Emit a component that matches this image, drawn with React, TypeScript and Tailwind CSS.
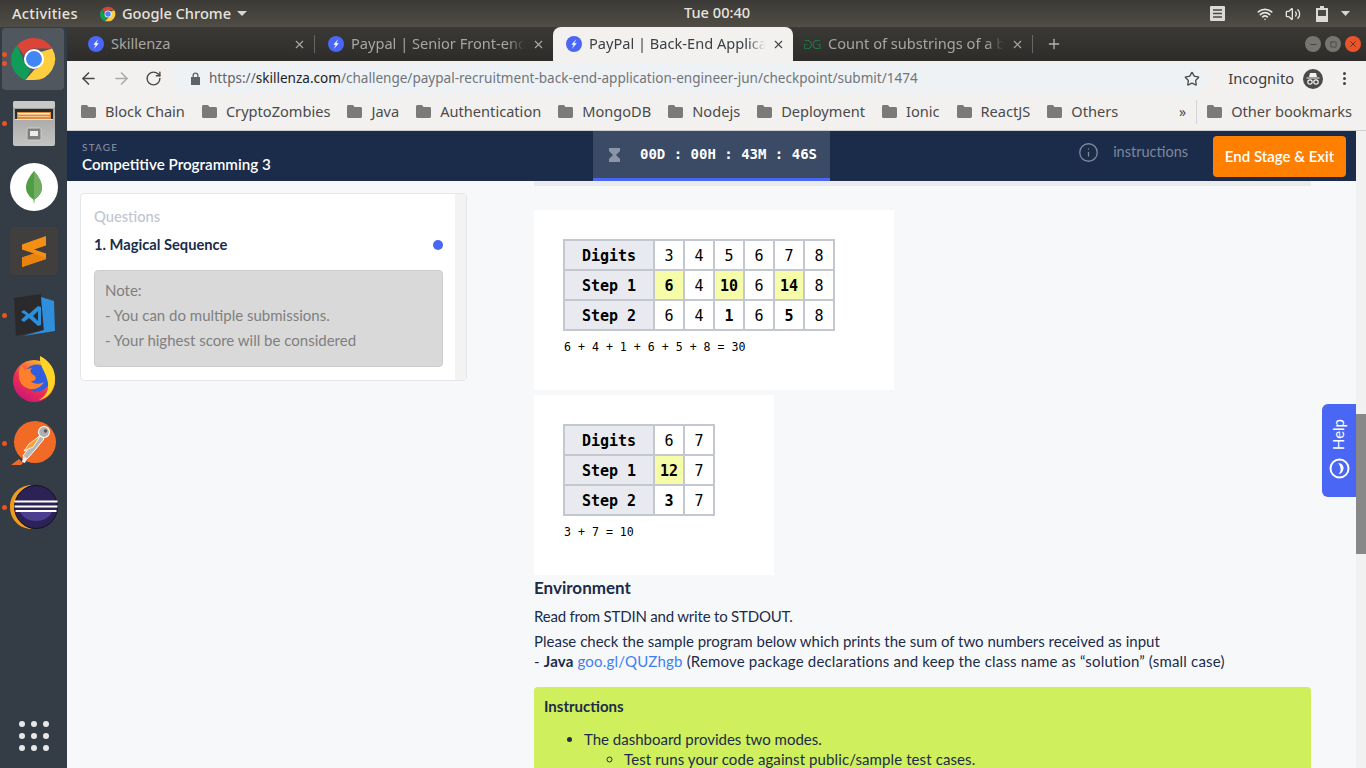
import React from 'react';
import { ArrowLeft, ArrowRight, RotateCw, Star, Info, X, Plus, Minus, Square, Wifi, Volume2 } from 'lucide-react';

const ui = 'font-["Noto_Sans",sans-serif]';
const app = 'font-["Lato",sans-serif]';
const mono = 'font-["DejaVu_Sans_Mono",monospace]';

function Bolt({ size = 16 }: { size?: number }) {
  return (
    <svg width={size} height={size} viewBox="0 0 16 16" className="shrink-0">
      <circle cx="8" cy="8" r="8" fill="#4a66f5" />
      <path d="M10.400 3 5.400 8.800h2.400l-2 4.200 5-5.800H8.300z" fill="#fff" />
    </svg>
  );
}

function ChromeLogo({ size }: { size: number }) {
  return (
    <svg width={size} height={size} viewBox="0 0 48 48">
      <path d="M24 2a22 22 0 0 1 19 11H24a11 11 0 0 0-10.400 7.400L6.300 9.900A22 22 0 0 1 24 2z" fill="#db4437" />
      <path d="M6.300 9.900 15.800 31a11 11 0 0 0 5 3.600L15 46A22 22 0 0 1 6.300 9.900z" fill="#0f9d58" />
      <path d="M43 13a22 22 0 0 1-19.500 33L15 46l9.500-11A11 11 0 0 0 33 24a11 11 0 0 0-3-7z" fill="#ffcd40" />
      <circle cx="24" cy="24" r="10.500" fill="#fff" />
      <circle cx="24" cy="24" r="8.300" fill="#4285f4" />
    </svg>
  );
}

function Files() {
  return (
    <svg width="42" height="45" viewBox="0 0 42 45">
      <defs>
        <linearGradient id="cab" x1="0" y1="0" x2="0" y2="1">
          <stop offset="0" stopColor="#9b9b99" />
          <stop offset="1" stopColor="#c4c4c2" />
        </linearGradient>
      </defs>
      <rect x="0" y="0" width="42" height="45" rx="2" fill="url(#cab)" />
      <rect x="0" y="0" width="42" height="7" rx="2" fill="#c9c9c7" />
      <rect x="2" y="8" width="38" height="10" fill="#2b2b2b" />
      <rect x="4" y="11" width="34" height="7" fill="#e08a3a" />
      <rect x="5" y="12" width="32" height="1.500" fill="#fbf0dd" />
      <rect x="5" y="15" width="32" height="1" fill="#f6c68a" />
      <rect x="2" y="18" width="38" height="1" fill="#e0e0de" />
      <rect x="14" y="27" width="14" height="12" rx="1.500" fill="#7f7f7d" stroke="#d0d0ce" />
      <rect x="17" y="30" width="8" height="5" fill="#ececea" />
    </svg>
  );
}

function Mongo() {
  return (
    <svg width="48" height="48" viewBox="0 0 48 48">
      <circle cx="24" cy="24" r="24" fill="#fff" />
      <path d="M24 8c-5 6-8 11-8 16.500 0 6 4 9.500 7.500 12L24 41l.5-4.500C28 34 32 30.500 32 24.500 32 19 29 14 24 8z" fill="#4f9e45" />
      <path d="M24 8c5 6 8 11 8 16.500 0 6-4 9.500-7.500 12L24 41z" fill="#72ad62" />
    </svg>
  );
}

function Sublime() {
  return (
    <svg width="48" height="48" viewBox="0 0 48 48">
      <rect width="48" height="48" rx="4" fill="#403f3e" />
      <path d="M12 17.500 36 9v9.500L24 22.500l12 4V32L12 40v-9.500L24 26.500 12 22.500z" fill="#f58f14" />
      <path d="M12 30.500 24 26.500l12 4V32L12 40z" fill="#e88310" />
    </svg>
  );
}

function VSCode() {
  return (
    <svg width="42" height="43" viewBox="0 0 42 43">
      <path d="M1 4 28 0l2 36-27 6z" fill="#2a2a2c" />
      <path d="M28 3 41 7l1 30-32 5 21-6z" fill="#2f8fdb" />
      <path d="M8 18l3-2 5 4 9-8 3 1v18l-3 1-9-8-5 4-3-2 5-5zm17-1-5 5 5 5z" fill="#2b8fdc" />
    </svg>
  );
}

function Firefox() {
  return (
    <svg width="44" height="46" viewBox="0 0 44 46">
      <defs>
        <linearGradient id="ff" x1="0.800" y1="0.100" x2="0.200" y2="1">
          <stop offset="0" stopColor="#ffb62e" />
          <stop offset="0.550" stopColor="#f0304f" />
          <stop offset="1" stopColor="#c4137d" />
        </linearGradient>
      </defs>
      <circle cx="22" cy="25" r="21" fill="url(#ff)" />
      <circle cx="25" cy="22" r="13.500" fill="#2f5fe0" />
      <path d="M9 9c1 2 3 4 6 4 2 0 3-1 5-1-2 2-2 4 0 6 3 2 5 3 3 6-1 1-3 1-4 1 2 3 8 4 13 1-3 6-11 9-17 6C6 29 5 17 9 9z" fill="#ff7f2a" />
      <path d="M28 0c10 5 16 14 15 25-1 10-8 18-16 19 8-4 11-12 8-21C33 15 27 9 28 0z" fill="#ffd426" />
    </svg>
  );
}

function Postman() {
  return (
    <svg width="46" height="46" viewBox="0 0 46 46">
      <circle cx="24" cy="22" r="21" fill="#f26b26" />
      <path d="M0 45l8-6 4 4-2 2z" fill="#f26b26" />
      <path d="M29 15l4 4-9 11-8 9-4-3 7-10z" fill="#b8b8b8" stroke="#fff" strokeWidth="1" />
      <path d="M30 15 18 24l-5 7 9-4z" fill="#f5a13a" stroke="#fff" strokeWidth="0.800" />
      <path d="M16 39l-2 4-3-1 1-5z" fill="#eee" />
      <circle cx="33" cy="12" r="5.500" fill="#b0b0b0" stroke="#fff" strokeWidth="1.200" />
      <circle cx="34.500" cy="11" r="1.800" fill="#5a5a5a" />
    </svg>
  );
}

function Eclipse() {
  return (
    <svg width="48" height="44" viewBox="0 0 48 44">
      <path d="M22 0C9 0 0 10 0 22s9 22 22 22c-10-3-17-11-17-22S12 3 22 0z" fill="#f09c1c" />
      <circle cx="26" cy="22" r="21.500" fill="#2c2255" stroke="#14102c" />
      <path d="M10 27h32c-3 6-9 9-16 9s-13-3-16-9z" fill="#4d3f8f" />
      <rect x="4.500" y="15.500" width="43" height="2" fill="#fff" />
      <rect x="4.500" y="20.500" width="43" height="2" fill="#fff" />
      <rect x="5.500" y="25" width="41" height="2" fill="#fff" />
    </svg>
  );
}

function DockItem({ dots = 0, active = false, children }: { dots?: number; active?: boolean; children: React.ReactNode }) {
  return (
    <div className="relative w-[67px] h-[64px] flex items-center justify-center">
      {active && <div className="absolute left-[2px] top-[1px] w-[62px] h-[62px] rounded bg-[#51575f]" />}
      <div className="relative">{children}</div>
      {dots > 0 && (
        <div className="absolute left-[2px] top-0 bottom-0 flex flex-col justify-center gap-[4px]">
          {Array.from({ length: dots }).map((_, i) => (
            <span key={i} className="block w-[5px] h-[5px] rounded-full bg-[#e95420]" />
          ))}
        </div>
      )}
    </div>
  );
}

function Dock() {
  return (
    <div className="w-[67px] shrink-0 bg-[#343c45] flex flex-col">
      <DockItem dots={2} active><ChromeLogo size={46} /></DockItem>
      <DockItem dots={1}><Files /></DockItem>
      <DockItem><Mongo /></DockItem>
      <DockItem><Sublime /></DockItem>
      <DockItem dots={1}><VSCode /></DockItem>
      <DockItem><Firefox /></DockItem>
      <DockItem dots={1}><Postman /></DockItem>
      <DockItem dots={1}><Eclipse /></DockItem>
      <div className="mt-auto mb-[17px] mx-auto grid grid-cols-3 gap-x-[6px] gap-y-[6px]">
        {Array.from({ length: 9 }).map((_, i) => (
          <span key={i} className="block w-[6px] h-[6px] rounded-full bg-[#e8e8e8]" />
        ))}
      </div>
    </div>
  );
}

function Tab({ title, active, icon, w, fade }: { title: string; active?: boolean; icon: React.ReactNode; w: string; fade?: boolean }) {
  return (
    <div className={`${w} h-[34px] shrink-0 flex items-center pl-[13px] pr-[8px] gap-[7px] relative ${active ? 'bg-[#f2f1f0] rounded-t-lg text-[#3c4043]' : 'text-[#a8a6a3]'}`}>
      {icon}
      <span className={`flex-1 overflow-hidden whitespace-nowrap text-[14.600px] ${fade ? '[mask-image:linear-gradient(to_right,black_90%,transparent)]' : ''}`}>{title}</span>
      <X size={13} strokeWidth={2} className={active ? 'text-[#444]' : 'text-[#aaa]'} />
    </div>
  );
}

function Bookmark({ label }: { label: string }) {
  return (
    <div className="flex items-center gap-[9px] shrink-0">
      <svg width="15" height="13" viewBox="0 0 15 13"><path d="M0 1.500C0 .7.7 0 1.500 0H6l1.500 2h6c.8 0 1.500.7 1.500 1.500v8c0 .8-.7 1.500-1.500 1.500h-12C.7 13 0 12.300 0 11.500z" fill="#7a7a7a" /></svg>
      <span className="text-[14.600px] text-[#4a4a4a] whitespace-nowrap">{label}</span>
    </div>
  );
}

function Chrome() {
  const marks = ['Block Chain', 'CryptoZombies', 'Java', 'Authentication', 'MongoDB', 'Nodejs', 'Deployment', 'Ionic', 'ReactJS', 'Others'];
  return (
    <div className={`${ui} shrink-0`}>
      <div className="h-[34px] flex items-center bg-gradient-to-b from-[#3b3935] to-[#2d2c2a] pl-[8px]">
        <Tab w="w-[239px]" title="Skillenza" icon={<Bolt />} />
        <div className="w-px h-[18px] bg-[#666]" />
        <Tab w="w-[238px]" fade title="Paypal | Senior Front-end" icon={<Bolt />} />
        <Tab w="w-[240px]" fade active title="PayPal | Back-End Applica" icon={<Bolt />} />
        <Tab
          w="w-[239px]"
          fade
          title="Count of substrings of a b"
          icon={
            <span className="w-[16px] -ml-[2px] mr-[1px] flex justify-center text-[13px] leading-none font-light text-[#1a8a4a]">
              <span className="scale-x-[-1]">G</span>
              <span>G</span>
            </span>
          }
        />
        <div className="w-px h-[18px] bg-[#666]" />
        <Plus size={16} className="ml-[13px] text-[#b5b3b0]" />
        <div className="ml-auto mr-[5px] flex gap-[4px]">
          <span className="w-[16px] h-[16px] rounded-full bg-[#77756f] flex items-center justify-center"><Minus size={9} className="text-[#333]" /></span>
          <span className="w-[16px] h-[16px] rounded-full bg-[#77756f] flex items-center justify-center"><Square size={7} className="text-[#333]" /></span>
          <span className="w-[16px] h-[16px] rounded-full bg-[#e9542a] flex items-center justify-center"><X size={10} className="text-[#432]" /></span>
        </div>
      </div>
      <div className="h-[35px] bg-[#f2f1f0] flex items-center pl-[12px] pr-[20px]">
        <ArrowLeft size={19} className="text-[#4a4a4a]" />
        <ArrowRight size={19} className="ml-[14px] text-[#aaa]" />
        <RotateCw size={17} className="ml-[14px] text-[#4a4a4a]" />
        <div className="ml-[9px] flex-1 h-[29px] rounded-full bg-[#eff2f4] flex items-center pl-[19px] pr-[6px] text-[13.550px] whitespace-nowrap">
          <svg width="11" height="13" viewBox="0 0 11 13"><path d="M2.500 5V3.500a3 3 0 0 1 6 0V5H10v8H1V5zM3.800 5h3.400V3.500a1.700 1.700 0 0 0-3.400 0z" fill="#5f6368" /></svg>
          <span className="ml-[8px] text-[#5f6368]">https://</span>
          <span className="text-[#202124]">skillenza.com</span>
          <span className="text-[#70757a]">/challenge/paypal-recruitment-back-end-application-engineer-jun/checkpoint/submit/1474</span>
          <Star size={16} className="ml-auto text-[#4a4a4a]" />
        </div>
        <span className="ml-[22px] text-[14.600px] text-[#3c3c3c]">Incognito</span>
        <svg width="20" height="20" viewBox="0 0 20 20" className="ml-[9px]">
          <circle cx="10" cy="10" r="10" fill="#4a4a4a" />
          <path d="M6 8l1-4h6l1 4zM3.500 8.500h13v1h-13z" fill="#f2f1f0" />
          <circle cx="7" cy="13" r="2.200" fill="none" stroke="#f2f1f0" strokeWidth="1.200" />
          <circle cx="13" cy="13" r="2.200" fill="none" stroke="#f2f1f0" strokeWidth="1.200" />
        </svg>
        <div className="ml-[20px] flex flex-col gap-[2px]">
          <span className="block w-[3px] h-[3px] rounded-full bg-[#444]" />
          <span className="block w-[3px] h-[3px] rounded-full bg-[#444]" />
          <span className="block w-[3px] h-[3px] rounded-full bg-[#444]" />
        </div>
      </div>
      <div className="h-[35px] bg-[#f2f1f0] border-b border-[#cfcfcf] flex items-center pl-[14px] pr-[14px] pb-[3px] gap-[17px]">
        {marks.map(m => <Bookmark key={m} label={m} />)}
        <span className="ml-auto text-[14px] text-[#4a4a4a]">»</span>
        <div className="w-px h-[24px] bg-[#d5d5d5] -mx-[7px]" />
        <Bookmark label="Other bookmarks" />
      </div>
    </div>
  );
}

function StageHeader() {
  return (
    <div className="h-[50px] shrink-0 bg-[#1b2c4a] flex items-stretch relative">
      <div className={`${app} w-[526px] pl-[15px] pt-[10px]`}>
        <div className="text-[10px] leading-[12px] tracking-[1.2px] text-[#8b95a7]">STAGE</div>
        <div className="mt-[2px] text-[15.200px] leading-[18px] font-semibold text-white">Competitive Programming 3</div>
      </div>
      <div className="w-[237px] bg-[#3b4a65] border-b-[3px] border-[#4a66f5] flex items-center pl-[16px]">
        <svg width="11" height="14" viewBox="0 0 11 14"><path d="M0 0h11v3L7 7l4 4v3H0v-3l4-4-4-4z" fill="#8b95a7" /></svg>
        <span className={`${mono} ml-[20px] text-[14px] font-bold text-white whitespace-pre`}>00D : 00H : 43M : 46S</span>
      </div>
      <div className={`${app} ml-auto flex items-center h-[43px] pr-[10px]`}>
        <div className="flex items-center -mt-[1px]">
          <Info size={21} strokeWidth={1.500} className="text-[#7d889c]" />
          <span className="ml-[14px] mr-[25px] text-[14.500px] text-[#7d889c]">instructions</span>
        </div>
        <button className="mt-[7px] w-[133px] h-[41px] rounded-sm bg-[#ff8000] text-white text-[15px] font-semibold">End Stage &amp; Exit</button>
      </div>
    </div>
  );
}

function Sidebar() {
  return (
    <div className={`${app} ml-[13px] mt-[12px] w-[387px] h-[188px] shrink-0 bg-white border border-[#e4e6ea] rounded-sm flex`}>
      <div className="flex-1 pl-[13px] pr-[12px] pt-[13px]">
        <div className="text-[14.700px] leading-[18px] font-medium text-[#c0c5d2]">Questions</div>
        <div className="mt-[10px] flex items-center justify-between">
          <span className="text-[14.700px] leading-[18px] font-bold text-[#1b2c4a]">1. Magical Sequence</span>
          <span className="block w-[10px] h-[10px] rounded-full bg-[#4a66f5] translate-y-px" />
        </div>
        <div className="mt-[17px] h-[97px] bg-[#d9d9d9] border border-[#cccccc] rounded-sm pl-[10px] pt-[8px] text-[15px] leading-[25px] text-[#7f7f7f]">
          <div className="-mt-[1px]">Note:</div>
          <div>- You can do multiple submissions.</div>
          <div>- Your highest score will be considered</div>
        </div>
      </div>
      <div className="w-[11px] bg-[#f3f3f3]" />
    </div>
  );
}

type Cell = { v: string; on?: boolean; b?: boolean };

function Sample({ width, rows, sum }: { width: string; rows: [string, Cell[]][]; sum: string }) {
  return (
    <div className={`${width} h-[180px] bg-white pl-[29px] pt-[29px] ${mono}`}>
      <table className="border-collapse text-[15px] text-black">
        <tbody>
          {rows.map(([label, cells]) => (
            <tr key={label} className="h-[30px]">
              <th className="w-[90px] p-0 pt-[2px] border-2 border-[#c3c8d0] bg-[#e9eaef] font-bold text-[15px]">{label}</th>
              {cells.map((c, i) => (
                <td key={i} className={`w-[30px] p-0 pt-[2px] text-center border-2 border-[#c3c8d0] ${c.on ? 'bg-[#f7fca8]' : ''} ${c.b ? 'font-bold' : ''}`}>{c.v}</td>
              ))}
            </tr>
          ))}
        </tbody>
      </table>
      <div className="mt-[8px] ml-[1px] text-[11.600px] leading-[16px] text-black">{sum}</div>
    </div>
  );
}

const plain = (s: string): Cell => ({ v: s });
const lit = (s: string): Cell => ({ v: s, on: true, b: true });
const bold = (s: string): Cell => ({ v: s, b: true });

function Content() {
  return (
    <div className={`${app} ml-[67px] w-[777px] shrink-0 text-[#1b2c4a]`}>
      <div className="h-[5px] bg-[#ebebeb]" />
      <div className="mt-[24px]">
        <Sample
          width="w-[360px]"
          sum="6 + 4 + 1 + 6 + 5 + 8 = 30"
          rows={[
            ['Digits', ['3', '4', '5', '6', '7', '8'].map(plain)],
            ['Step 1', [lit('6'), plain('4'), lit('10'), plain('6'), lit('14'), plain('8')]],
            ['Step 2', [plain('6'), plain('4'), bold('1'), plain('6'), bold('5'), plain('8')]],
          ]}
        />
      </div>
      <div className="mt-[5px]">
        <Sample
          width="w-[240px]"
          sum="3 + 7 = 10"
          rows={[
            ['Digits', [plain('6'), plain('7')]],
            ['Step 1', [lit('12'), plain('7')]],
            ['Step 2', [bold('3'), plain('7')]],
          ]}
        />
      </div>
      <h3 className="mt-[3px] text-[17px] leading-[20px] font-bold">Environment</h3>
      <p className="mt-[8px] text-[15px] leading-[20px] tracking-[-0.2px]">Read from STDIN and write to STDOUT.</p>
      <p className="mt-[5px] text-[15px] leading-[20px]">Please check the sample program below which prints the sum of two numbers received as input</p>
      <p className="text-[15px] leading-[20px] tracking-[0.18px]">
        - <b>Java</b> <span className="text-[#3f7ff0]">goo.gl/QUZhgb</span> (Remove package declarations and keep the class name as “solution” (small case)
      </p>
      <div className="mt-[16px] h-[120px] bg-[#cfef5c] rounded-t-sm pl-[10px] pt-[10px] text-[15px]">
        <div className="leading-[18px] font-bold">Instructions</div>
        <ul className="mt-[14px] ml-[40px] list-disc leading-[20px]">
          <li>
            The dashboard provides two modes.
            <ul className="ml-[40px] list-[circle] tracking-[0.1px]">
              <li>Test runs your code against public/sample test cases.</li>
            </ul>
          </li>
        </ul>
      </div>
    </div>
  );
}

function TopBar() {
  return (
    <div className={`${ui} h-[27px] shrink-0 bg-gradient-to-b from-[#3c3a36] to-[#504d46] flex items-center text-[14.600px] font-medium text-[#e6e4df] relative`}>
      <span className="ml-[12px] w-[68px] tracking-[0.3px] whitespace-nowrap">Activities</span>
      <span className="ml-[20px]"><ChromeLogo size={16} /></span>
      <span className="ml-[6px]">Google Chrome</span>
      <svg width="10" height="5" viewBox="0 0 10 5" className="ml-[6px]"><path d="M0 0h10L5 5z" fill="#d8d6d1" /></svg>
      <span className="absolute left-[684px] top-[2px]">Tue 00:40</span>
      <div className="ml-auto mr-[16px] flex items-center">
        <svg width="15" height="15" viewBox="0 0 15 15"><rect width="15" height="15" rx="1" fill="#dcdad5" /><path d="M3 4h9M3 7.500h9M3 11h9" stroke="#4a4843" strokeWidth="1.500" /></svg>
        <Wifi size={16} strokeWidth={2.500} className="ml-[32px] text-[#e6e4df]" />
        <Volume2 size={16} className="ml-[12px] text-[#e6e4df]" />
        <svg width="12" height="16" viewBox="0 0 12 16" className="ml-[15px]"><path d="M4 0h4v2h4v14H0V2h4z" fill="#dcdad5" /><rect x="2" y="4" width="8" height="6" fill="#4a4843" /></svg>
        <svg width="9" height="5" viewBox="0 0 9 5" className="ml-[13px]"><path d="M0 0h9L4.500 5z" fill="#d8d6d1" /></svg>
      </div>
    </div>
  );
}

export default function App() {
  return (
    <div className="w-[1366px] h-[768px] overflow-hidden flex flex-col bg-[#f7f8fa]">
      <TopBar />
      <div className="flex-1 min-h-0 flex">
        <Dock />
        <div className="flex-1 min-w-0 flex flex-col relative">
          <Chrome />
          <div className="flex-1 min-h-0 flex">
            <div className="flex-1 min-w-0 flex flex-col overflow-hidden">
              <StageHeader />
              <div className="flex-1 min-h-0 flex items-start">
                <Sidebar />
                <Content />
              </div>
            </div>
            <div className="w-[10px] shrink-0 bg-[#f1f1f1] pt-[283px]">
              <div className="h-[140px] bg-[#888888]" />
            </div>
          </div>
          <div className="absolute right-[10px] top-[377px] w-[34px] h-[93px] rounded-l-md bg-[#4a66f5] flex flex-col items-center justify-end pb-[18px] text-white">
            <span className={`${app} text-[15px] leading-[18px] [writing-mode:vertical-rl] rotate-180 -translate-x-px`}>Help</span>
            <svg width="21" height="21" viewBox="0 0 21 21" className="mt-[8px]">
              <circle cx="10.500" cy="10.500" r="9" fill="none" stroke="#fff" strokeWidth="2" />
              <path d="M9 5c4 0 6 3 5.500 6-.5 3-3 5-5 5 2-2 2.500-4 2-6C11 8 10.500 6 9 5z" fill="#fff" />
            </svg>
          </div>
        </div>
      </div>
    </div>
  );
}
